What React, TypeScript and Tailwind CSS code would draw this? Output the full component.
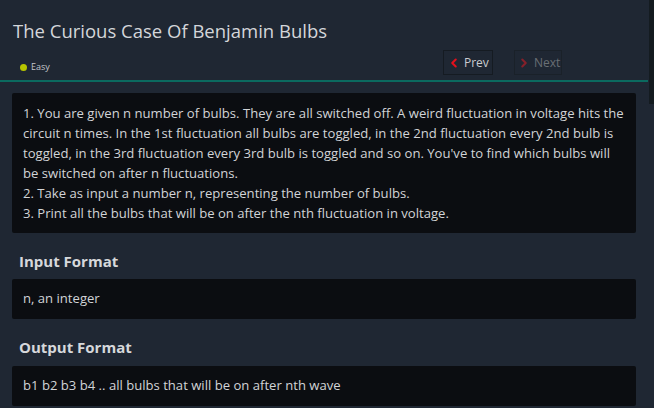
import { ChevronLeft, ChevronRight } from 'lucide-react';

const font = { fontFamily: '"Open Sans", "Noto Sans", Arial, sans-serif' };

export default function App() {
    return (
        <div className="relative w-[654px] h-[408px] overflow-hidden bg-[#1f2733] text-[#d2d4d7]" style={font}>
            {/* scrollbar thumb */}
            <div className="absolute right-0 top-0 w-[5px] h-[104px] bg-[#141b20]" />

            {/* header */}
            <div className="w-[648px] border-b-2 border-[#0b6a5f]">
                <div className="px-[13px] pt-[19px] h-[80px] relative">
                    <h1 className="text-[18.5px] leading-[24px] text-[#d4d6da]">The Curious Case Of Benjamin Bulbs</h1>
                    <div className="flex items-center mt-[9px]">
                        <div className="flex items-center gap-[4px] pl-[7px] pt-[7px]">
                            <span className="w-[7px] h-[7px] rounded-full bg-[#b6c400]" />
                            <span className="text-[9px] text-[#c3c6ca]">Easy</span>
                        </div>
                        <div className="ml-auto flex gap-[21px] mr-[73px] -mt-[2px]">
                            <button className="flex items-center h-[25px] w-[50px] pl-[3px] gap-[3px] border border-[#151b22] text-[12px] text-[#c9ccd0]">
                                <ChevronLeft size={14} strokeWidth={3.5} className="text-[#e3101c]" />
                                Prev
                            </button>
                            <button className="flex items-center h-[25px] w-[48px] pl-[2px] gap-[3px] border border-[#1a2129] text-[12px] text-[#6a6f75]">
                                <ChevronRight size={14} strokeWidth={3.5} className="text-[#86202a]" />
                                Next
                            </button>
                        </div>
                    </div>
                </div>
            </div>

            {/* body */}
            <div className="pl-[12px] pr-[18px] pt-[11px] flex flex-col">
                <div className="bg-[#0b0d11] rounded-[2px] pl-[11px] pr-[10px] py-[10px] text-[13.1px] leading-[20px]">
                    <p>1. You are given n number of bulbs. They are all switched off. A weird fluctuation in voltage hits the circuit n times. In the 1st fluctuation all bulbs are toggled, in the 2nd fluctuation every 2nd bulb is toggled, in the 3rd fluctuation every 3rd bulb is toggled and so on. You've to find which bulbs will be switched on after n fluctuations.</p>
                    <p>2. Take as input a number n, representing the number of bulbs.</p>
                    <p>3. Print all the bulbs that will be on after the nth fluctuation in voltage.</p>
                </div>

                <h2 className="font-bold text-[15px] leading-[20px] mt-[18px] mb-[8px] pl-[7px] text-[#d6d8db]">Input Format</h2>
                <div className="bg-[#0b0d11] rounded-[2px] px-[11px] h-[40px] flex items-center text-[13.1px]">n, an integer</div>

                <h2 className="font-bold text-[15px] leading-[20px] mt-[18px] mb-[9px] pl-[7px] text-[#d6d8db]">Output Format</h2>
                <div className="bg-[#0b0d11] rounded-[2px] px-[11px] h-[40px] flex items-center text-[13.1px]">b1 b2 b3 b4 .. all bulbs that will be on after nth wave</div>
            </div>
        </div>
    );
}
